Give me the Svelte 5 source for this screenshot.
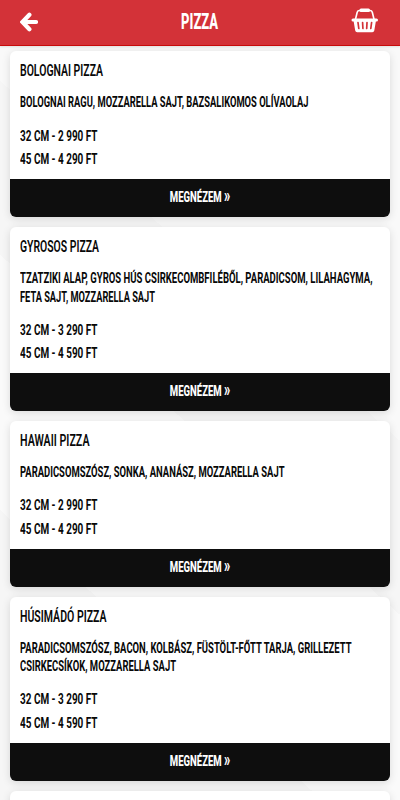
<script lang="ts">

	type Line = { text : string, width : number };

	type Pizza = {
		name : Line;
		desc : Line[];
		prices : string[];
	};

	const small = ['32 cm - 2 990 Ft', '45 cm - 4 290 Ft'];
	const large = ['32 cm - 3 290 Ft', '45 cm - 4 590 Ft'];

	const pizzas : Pizza[] = [
		{
			name: { text: 'Bolognai pizza', width: 83 },
			desc: [{ text: 'Bolognai ragu, mozzarella sajt, bazsalikomos olívaolaj', width: 288.5 }],
			prices: small
		},
		{
			name: { text: 'Gyrosos pizza', width: 79 },
			desc: [
				{ text: 'Tzatziki alap, gyros hús csirkecombfiléből, paradicsom, lilahagyma,', width: 352.5 },
				{ text: 'feta sajt, mozzarella sajt', width: 135 }
			],
			prices: large
		},
		{
			name: { text: 'Hawaii pizza', width: 69.5 },
			desc: [{ text: 'Paradicsomszósz, sonka, ananász, mozzarella sajt', width: 264.5 }],
			prices: small
		},
		{
			name: { text: 'Húsimádó pizza', width: 86.5 },
			desc: [
				{ text: 'Paradicsomszósz, bacon, kolbász, füstölt-főtt tarja, grillezett', width: 331.5 },
				{ text: 'csirkecsíkok, mozzarella sajt', width: 156 }
			],
			prices: large
		}
	];

	// condenses a line of text to the given width
	function fit (node : HTMLElement, width : number) {
		const natural = node.getBoundingClientRect().width;
		node.style.transform = `scaleX(${width / natural})`;
	}

</script>

<div class="page">
	<header>
		<button class="icon-button" aria-label="Vissza">
			<svg width="18" height="20" viewBox="0 0 18 20">
				<path d="M9.400 2.700 2.500 10l6.900 7.300M3 10h13" fill="none" stroke="#fff" stroke-width="4.200" stroke-linecap="round" />
			</svg>
		</button>
		<h1><span class="fit" use:fit={37}>Pizza</span></h1>
		<button class="icon-button" aria-label="Kosár">
			<svg width="28" height="26" viewBox="0 0 28 26">
				<path d="M4.300 12 6.200 4.200Q6.700 2.500 8.500 2.500H19q1.800 0 2.300 1.700L23.200 12" fill="none" stroke="#fff" stroke-width="1.600" />
				<rect x="8.500" y="0.500" width="10.500" height="3.500" rx="1.500" fill="#fff" />
				<rect x="0.500" y="10.500" width="26.500" height="3" rx="1.500" fill="#fff" />
				<path d="M2.500 12.500H25L23.300 22.500q-.3 1.800-2 1.800H6.200q-1.700 0-2-1.800z" fill="#fff" />
				<path d="M7 14.500l.8 6M11.600 14.500l.3 6M16 14.500l-.3 6M20.600 14.500l-.8 6" stroke="#d33238" stroke-width="1.700" stroke-linecap="round" />
			</svg>
		</button>
	</header>

	<main>
		{#each pizzas as pizza}
			<article class="card">
				<div class="details">
					<h2><span class="fit" use:fit={pizza.name.width}>{pizza.name.text}</span></h2>
					<div class="desc">
						{#each pizza.desc as line}
							<p><span class="fit" use:fit={line.width}>{line.text}</span></p>
						{/each}
					</div>
					<ul>
						{#each pizza.prices as price}
							<li><span class="fit" use:fit={77.5}>{price}</span></li>
						{/each}
					</ul>
				</div>
				<button class="view-button"><span class="fit" use:fit={60.5}>Megnézem <span class="arrows">»</span></span></button>
			</article>
		{/each}
		<article class="card next"></article>
	</main>
</div>

<style>

	:global(body) {
		background-color: #f8f8f8;
	}

	.page {
		display: flex;
		flex-direction: column;
		height: 800px;
		overflow: hidden;
		font-family: Roboto, 'Liberation Sans', sans-serif;
		text-transform: uppercase;
		color: #080808;
		background: linear-gradient(42deg, #f6f6f6 0 25%, #fafafa 25% 47%, #f6f6f6 47% 62%, #f9f9f9 62%);
	}

	.fit {
		display: inline-block;
		flex-shrink: 0;
		white-space: nowrap;
		transform-origin: left center;
	}

	header {
		display: flex;
		flex-shrink: 0;
		align-items: center;
		justify-content: space-between;
		box-sizing: border-box;
		height: 46px;
		padding: 0 21px 1px 20px;
		background-color: #d33238;
		border-bottom: 1px solid #c90c0c;
		box-shadow: 0 1px 2px rgba(0, 0, 0, .1);
	}

	button {
		font-family: inherit;
		text-transform: inherit;
		border: none;
		cursor: pointer;
	}

	.icon-button {
		display: flex;
		width: 28px;
		padding: 0;
		background: none;
	}

	.icon-button:last-child {
		padding-bottom: 2px;
	}

	h1 {
		display: flex;
		justify-content: center;
		width: 60px;
		font-size: 21.5px;
		font-weight: 800;
		line-height: 26px;
		color: #fff;
	}

	h1, h2, p, ul {
		margin: 0;
	}

	h1 .fit, .view-button .fit {
		transform-origin: center;
	}

	main {
		display: flex;
		flex-direction: column;
		gap: 10px;
		padding: 5.2px 10px 0;
	}

	.card {
		flex-shrink: 0;
		overflow: hidden;
		background-color: #fff;
		border-radius: 6px;
		box-shadow: 0 2px 8px rgba(0, 0, 0, .13);
	}

	.details {
		padding: 9.3px 10px 7px;
	}

	h2 {
		font-size: 17px;
		font-weight: 600;
		line-height: 20px;
	}

	.desc {
		margin: 13px 0 12.7px;
	}

	p {
		font-size: 15px;
		font-weight: 700;
		line-height: 18.4px;
	}

	ul {
		padding: 0;
		list-style: none;
	}

	li {
		font-size: 15px;
		font-weight: 700;
		line-height: 23.6px;
	}

	.view-button {
		display: flex;
		align-items: center;
		justify-content: center;
		width: 100%;
		height: 38.1px;
		padding: 0 0 1px;
		font-size: 15.5px;
		font-weight: 800;
		line-height: 18px;
		color: #fff;
		background-color: #0e0e0e;
	}

	.arrows {
		font-size: 20px;
		line-height: 1px;
	}

	.next {
		height: 60px;
	}

</style>
